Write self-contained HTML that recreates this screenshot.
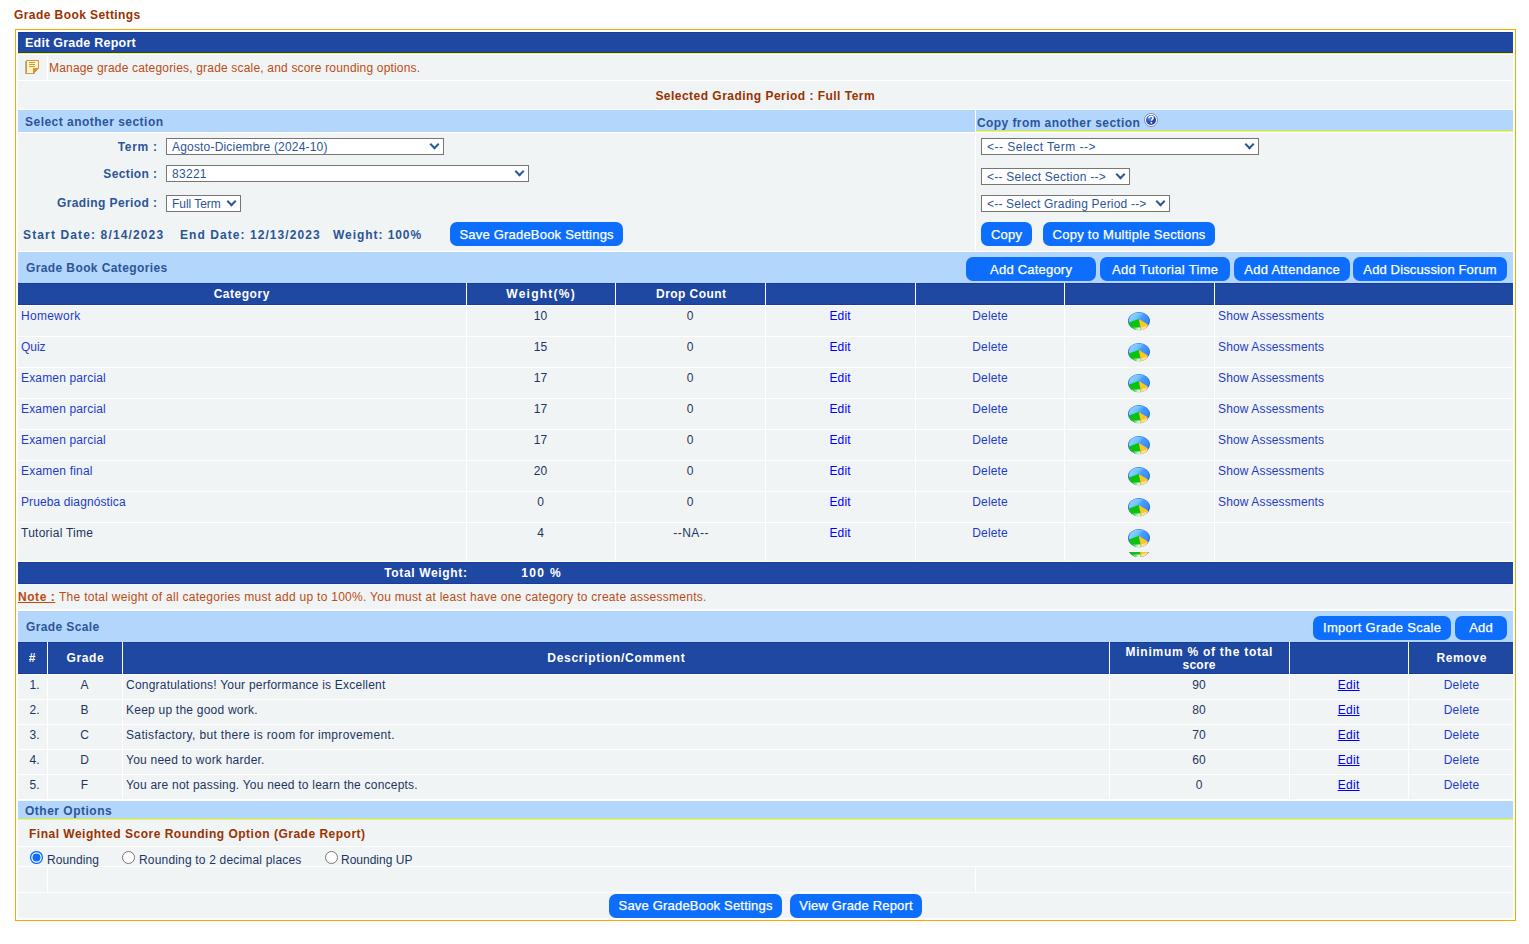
<!DOCTYPE html><html><head><meta charset="utf-8"><style>
*{margin:0;padding:0}
html,body{width:1529px;height:944px;overflow:hidden;background:#fff}
#root{position:relative;width:1529px;height:944px;overflow:hidden;font-family:"Liberation Sans",sans-serif}
#root>div{position:absolute}
.t{white-space:nowrap;height:0;line-height:0}
.t.c{width:800px;text-align:center}
.t.r{width:800px;text-align:right}
.sel{height:17px;box-sizing:border-box;border:1px solid #767676;background:#fff;font-size:12px;color:#2c5596;line-height:17px;padding-left:5px;white-space:nowrap;overflow:hidden}
.sel i{position:absolute;right:5px;top:2px;width:5px;height:5px;border-right:2px solid #2c56a2;border-bottom:2px solid #2c56a2;transform:rotate(45deg)}
.btn{background:#0d6efd;color:#fff;border-radius:7px;text-align:center;font-size:13px;white-space:nowrap;-webkit-text-stroke:0.25px #fff}
.pie{width:22px;height:19px}
.radio{width:13px;height:13px;box-sizing:border-box;border:1px solid #767676;border-radius:50%;background:#fff}
.radio.on{border:2px solid #0d6efd;background:#0d6efd;box-shadow:inset 0 0 0 2px #fff}
</style></head><body><div id="root">
<div class="t" style="left:14px;top:15px;font-size:12px;letter-spacing:0.422px;color:#993300;font-weight:bold;">Grade Book Settings</div>
<div style="left:15px;top:29px;width:1501px;height:892px;background:#fff;border:1px solid #ffa500;box-sizing:border-box;"></div>
<div style="left:18px;top:32px;width:1495px;height:21px;background:#1f48a2;border-top:1px solid #163ca0;border-bottom:1px solid #163ca0;box-sizing:border-box;"></div>
<div style="left:18px;top:53px;width:1495px;height:1px;background:#ffff00;"></div>
<div class="t" style="left:25px;top:43px;font-size:12.5px;letter-spacing:0.232px;color:#fff;font-weight:bold;">Edit Grade Report</div>
<div style="left:18px;top:55px;width:29px;height:25px;background:#f1f4f5;"></div>
<div style="left:48px;top:55px;width:1465px;height:25px;background:#f1f4f5;"></div>
<svg style="position:absolute;left:25px;top:59px" width="15" height="16" viewBox="0 0 15 16"><rect x="0" y="2" width="10" height="13" fill="#a9aeb8"/><path d="M1.5 1.5H13.5V9.5L8.5 14.5H1.5Z" fill="#fff6c8" stroke="#d6953d" stroke-width="1"/><path d="M4 3.5H10M4 5.5H10M4 7.5H10" stroke="#d6953d" stroke-width="1"/><path d="M8 9H14L8 15Z" fill="#d6953d"/></svg>
<div class="t" style="left:49px;top:68px;font-size:12px;letter-spacing:0.180px;color:#bc4c14;">Manage grade categories, grade scale, and score rounding options.</div>
<div style="left:18px;top:81px;width:1495px;height:28px;background:#f1f4f5;"></div>
<div class="t c" style="left:365.24px;top:96px;font-size:12px;letter-spacing:0.473px;color:#993300;font-weight:bold;">Selected Grading Period : Full Term</div>
<div style="left:18px;top:110px;width:957px;height:22px;background:#b3d6fd;"></div>
<div style="left:976px;top:110px;width:537px;height:21px;background:#b3d6fd;"></div>
<div style="left:976px;top:131px;width:537px;height:1px;background:#ffff00;"></div>
<div class="t" style="left:25px;top:122px;font-size:12px;letter-spacing:0.475px;color:#2c5596;font-weight:bold;">Select another section</div>
<div class="t" style="left:977px;top:123px;font-size:12px;letter-spacing:0.421px;color:#2c5596;font-weight:bold;">Copy from another section</div>
<div style="left:18px;top:133px;width:957px;height:118px;background:#f1f4f5;"></div>
<div style="left:976px;top:133px;width:537px;height:118px;background:#f1f4f5;"></div>
<div style="left:18px;top:252px;width:1495px;height:31px;background:#b3d6fd;"></div>
<div class="t" style="left:26px;top:268px;font-size:12px;letter-spacing:0.392px;color:#2c5596;font-weight:bold;">Grade Book Categories</div>
<div style="left:18px;top:283px;width:1495px;height:22px;background:#1f48a2;border-top:1px solid #163ca0;border-bottom:1px solid #163ca0;box-sizing:border-box;"></div>
<div style="left:466px;top:283px;width:1px;height:22px;background:#fff;"></div>
<div style="left:615px;top:283px;width:1px;height:22px;background:#fff;"></div>
<div style="left:765px;top:283px;width:1px;height:22px;background:#fff;"></div>
<div style="left:915px;top:283px;width:1px;height:22px;background:#fff;"></div>
<div style="left:1064px;top:283px;width:1px;height:22px;background:#fff;"></div>
<div style="left:1214px;top:283px;width:1px;height:22px;background:#fff;"></div>
<div class="t c" style="left:-158.24px;top:294px;font-size:12px;letter-spacing:0.523px;color:#fff;font-weight:bold;">Category</div>
<div class="t c" style="left:141.13px;top:294px;font-size:12px;letter-spacing:1.252px;color:#fff;font-weight:bold;">Weight(%)</div>
<div class="t c" style="left:291.22px;top:294px;font-size:12px;letter-spacing:0.432px;color:#fff;font-weight:bold;">Drop Count</div>
<div style="left:18px;top:306px;width:448px;height:30px;background:#f1f4f5;"></div>
<div style="left:467px;top:306px;width:148px;height:30px;background:#f1f4f5;"></div>
<div style="left:616px;top:306px;width:149px;height:30px;background:#f1f4f5;"></div>
<div style="left:766px;top:306px;width:149px;height:30px;background:#f1f4f5;"></div>
<div style="left:916px;top:306px;width:148px;height:30px;background:#f1f4f5;"></div>
<div style="left:1065px;top:306px;width:149px;height:30px;background:#f1f4f5;"></div>
<div style="left:1215px;top:306px;width:298px;height:30px;background:#f1f4f5;"></div>
<div class="t" style="left:21px;top:316px;font-size:12px;letter-spacing:0.269px;color:#1e3cc8;">Homework</div>
<div class="t c" style="left:140.64px;top:316px;font-size:12px;letter-spacing:0.290px;color:#1d3461;">10</div>
<div class="t c" style="left:290.14px;top:316px;font-size:12px;letter-spacing:0.290px;color:#1d3461;">0</div>
<div class="t c" style="left:440.09px;top:316px;font-size:12px;letter-spacing:0.181px;color:#0000ff;">Edit</div>
<div class="t c" style="left:590.07px;top:316px;font-size:12px;letter-spacing:0.135px;color:#1e3cc8;">Delete</div>
<div class="pie" style="left:1128px;top:312px"><svg width="22" height="19" viewBox="0 0 22 19"><defs><linearGradient id="pb" x1="0" y1="0" x2="1" y2="0.6"><stop offset="0" stop-color="#a9d6ff"/><stop offset="0.45" stop-color="#6cc4ff"/><stop offset="0.6" stop-color="#4a9cff"/><stop offset="1" stop-color="#2f8af5"/></linearGradient><linearGradient id="pg" x1="0" y1="0" x2="0" y2="1"><stop offset="0" stop-color="#00c800"/><stop offset="0.6" stop-color="#10c010"/><stop offset="1" stop-color="#50c850"/></linearGradient><linearGradient id="ps" x1="0" y1="0" x2="1" y2="0"><stop offset="0" stop-color="#30b830"/><stop offset="0.75" stop-color="#eafbea"/><stop offset="1" stop-color="#50c850"/></linearGradient><clipPath id="pc"><ellipse cx="11" cy="9.1" rx="10.6" ry="9.1"/></clipPath></defs><ellipse cx="11" cy="9.1" rx="11" ry="9" fill="#1e64e6"/><ellipse cx="11" cy="8.2" rx="10.2" ry="7.8" fill="url(#pb)"/><g clip-path="url(#pc)"><path d="M10.8 7 L1.5 10.2 L0 20 L13.6 20 Z" fill="url(#pg)"/><path d="M4 15.5 L5 19 L13.6 19 L13.4 15.2 C10 15.6 7 15.6 4 15.5Z" fill="url(#ps)"/><path d="M10.8 7 L19.6 12.3 L22 20 L13.6 20 Z" fill="#ffc61c"/><path d="M13.6 20 L13.4 15.2 C15 15 16.8 14.4 19 13.8 L19 20Z" fill="#ffdca0"/></g></svg></div>
<div class="t" style="left:1218px;top:316px;font-size:12px;letter-spacing:0.135px;color:#1e3cc8;">Show Assessments</div>
<div style="left:18px;top:337px;width:448px;height:30px;background:#f1f4f5;"></div>
<div style="left:467px;top:337px;width:148px;height:30px;background:#f1f4f5;"></div>
<div style="left:616px;top:337px;width:149px;height:30px;background:#f1f4f5;"></div>
<div style="left:766px;top:337px;width:149px;height:30px;background:#f1f4f5;"></div>
<div style="left:916px;top:337px;width:148px;height:30px;background:#f1f4f5;"></div>
<div style="left:1065px;top:337px;width:149px;height:30px;background:#f1f4f5;"></div>
<div style="left:1215px;top:337px;width:298px;height:30px;background:#f1f4f5;"></div>
<div class="t" style="left:21px;top:347px;font-size:12px;letter-spacing:-0.018px;color:#1e3cc8;">Quiz</div>
<div class="t c" style="left:140.64px;top:347px;font-size:12px;letter-spacing:0.290px;color:#1d3461;">15</div>
<div class="t c" style="left:290.14px;top:347px;font-size:12px;letter-spacing:0.290px;color:#1d3461;">0</div>
<div class="t c" style="left:440.09px;top:347px;font-size:12px;letter-spacing:0.181px;color:#0000ff;">Edit</div>
<div class="t c" style="left:590.07px;top:347px;font-size:12px;letter-spacing:0.135px;color:#1e3cc8;">Delete</div>
<div class="pie" style="left:1128px;top:343px"><svg width="22" height="19" viewBox="0 0 22 19"><defs><linearGradient id="pb" x1="0" y1="0" x2="1" y2="0.6"><stop offset="0" stop-color="#a9d6ff"/><stop offset="0.45" stop-color="#6cc4ff"/><stop offset="0.6" stop-color="#4a9cff"/><stop offset="1" stop-color="#2f8af5"/></linearGradient><linearGradient id="pg" x1="0" y1="0" x2="0" y2="1"><stop offset="0" stop-color="#00c800"/><stop offset="0.6" stop-color="#10c010"/><stop offset="1" stop-color="#50c850"/></linearGradient><linearGradient id="ps" x1="0" y1="0" x2="1" y2="0"><stop offset="0" stop-color="#30b830"/><stop offset="0.75" stop-color="#eafbea"/><stop offset="1" stop-color="#50c850"/></linearGradient><clipPath id="pc"><ellipse cx="11" cy="9.1" rx="10.6" ry="9.1"/></clipPath></defs><ellipse cx="11" cy="9.1" rx="11" ry="9" fill="#1e64e6"/><ellipse cx="11" cy="8.2" rx="10.2" ry="7.8" fill="url(#pb)"/><g clip-path="url(#pc)"><path d="M10.8 7 L1.5 10.2 L0 20 L13.6 20 Z" fill="url(#pg)"/><path d="M4 15.5 L5 19 L13.6 19 L13.4 15.2 C10 15.6 7 15.6 4 15.5Z" fill="url(#ps)"/><path d="M10.8 7 L19.6 12.3 L22 20 L13.6 20 Z" fill="#ffc61c"/><path d="M13.6 20 L13.4 15.2 C15 15 16.8 14.4 19 13.8 L19 20Z" fill="#ffdca0"/></g></svg></div>
<div class="t" style="left:1218px;top:347px;font-size:12px;letter-spacing:0.135px;color:#1e3cc8;">Show Assessments</div>
<div style="left:18px;top:368px;width:448px;height:30px;background:#f1f4f5;"></div>
<div style="left:467px;top:368px;width:148px;height:30px;background:#f1f4f5;"></div>
<div style="left:616px;top:368px;width:149px;height:30px;background:#f1f4f5;"></div>
<div style="left:766px;top:368px;width:149px;height:30px;background:#f1f4f5;"></div>
<div style="left:916px;top:368px;width:148px;height:30px;background:#f1f4f5;"></div>
<div style="left:1065px;top:368px;width:149px;height:30px;background:#f1f4f5;"></div>
<div style="left:1215px;top:368px;width:298px;height:30px;background:#f1f4f5;"></div>
<div class="t" style="left:21px;top:378px;font-size:12px;letter-spacing:0.157px;color:#1e3cc8;">Examen parcial</div>
<div class="t c" style="left:140.64px;top:378px;font-size:12px;letter-spacing:0.290px;color:#1d3461;">17</div>
<div class="t c" style="left:290.14px;top:378px;font-size:12px;letter-spacing:0.290px;color:#1d3461;">0</div>
<div class="t c" style="left:440.09px;top:378px;font-size:12px;letter-spacing:0.181px;color:#0000ff;">Edit</div>
<div class="t c" style="left:590.07px;top:378px;font-size:12px;letter-spacing:0.135px;color:#1e3cc8;">Delete</div>
<div class="pie" style="left:1128px;top:374px"><svg width="22" height="19" viewBox="0 0 22 19"><defs><linearGradient id="pb" x1="0" y1="0" x2="1" y2="0.6"><stop offset="0" stop-color="#a9d6ff"/><stop offset="0.45" stop-color="#6cc4ff"/><stop offset="0.6" stop-color="#4a9cff"/><stop offset="1" stop-color="#2f8af5"/></linearGradient><linearGradient id="pg" x1="0" y1="0" x2="0" y2="1"><stop offset="0" stop-color="#00c800"/><stop offset="0.6" stop-color="#10c010"/><stop offset="1" stop-color="#50c850"/></linearGradient><linearGradient id="ps" x1="0" y1="0" x2="1" y2="0"><stop offset="0" stop-color="#30b830"/><stop offset="0.75" stop-color="#eafbea"/><stop offset="1" stop-color="#50c850"/></linearGradient><clipPath id="pc"><ellipse cx="11" cy="9.1" rx="10.6" ry="9.1"/></clipPath></defs><ellipse cx="11" cy="9.1" rx="11" ry="9" fill="#1e64e6"/><ellipse cx="11" cy="8.2" rx="10.2" ry="7.8" fill="url(#pb)"/><g clip-path="url(#pc)"><path d="M10.8 7 L1.5 10.2 L0 20 L13.6 20 Z" fill="url(#pg)"/><path d="M4 15.5 L5 19 L13.6 19 L13.4 15.2 C10 15.6 7 15.6 4 15.5Z" fill="url(#ps)"/><path d="M10.8 7 L19.6 12.3 L22 20 L13.6 20 Z" fill="#ffc61c"/><path d="M13.6 20 L13.4 15.2 C15 15 16.8 14.4 19 13.8 L19 20Z" fill="#ffdca0"/></g></svg></div>
<div class="t" style="left:1218px;top:378px;font-size:12px;letter-spacing:0.135px;color:#1e3cc8;">Show Assessments</div>
<div style="left:18px;top:399px;width:448px;height:30px;background:#f1f4f5;"></div>
<div style="left:467px;top:399px;width:148px;height:30px;background:#f1f4f5;"></div>
<div style="left:616px;top:399px;width:149px;height:30px;background:#f1f4f5;"></div>
<div style="left:766px;top:399px;width:149px;height:30px;background:#f1f4f5;"></div>
<div style="left:916px;top:399px;width:148px;height:30px;background:#f1f4f5;"></div>
<div style="left:1065px;top:399px;width:149px;height:30px;background:#f1f4f5;"></div>
<div style="left:1215px;top:399px;width:298px;height:30px;background:#f1f4f5;"></div>
<div class="t" style="left:21px;top:409px;font-size:12px;letter-spacing:0.157px;color:#1e3cc8;">Examen parcial</div>
<div class="t c" style="left:140.64px;top:409px;font-size:12px;letter-spacing:0.290px;color:#1d3461;">17</div>
<div class="t c" style="left:290.14px;top:409px;font-size:12px;letter-spacing:0.290px;color:#1d3461;">0</div>
<div class="t c" style="left:440.09px;top:409px;font-size:12px;letter-spacing:0.181px;color:#0000ff;">Edit</div>
<div class="t c" style="left:590.07px;top:409px;font-size:12px;letter-spacing:0.135px;color:#1e3cc8;">Delete</div>
<div class="pie" style="left:1128px;top:405px"><svg width="22" height="19" viewBox="0 0 22 19"><defs><linearGradient id="pb" x1="0" y1="0" x2="1" y2="0.6"><stop offset="0" stop-color="#a9d6ff"/><stop offset="0.45" stop-color="#6cc4ff"/><stop offset="0.6" stop-color="#4a9cff"/><stop offset="1" stop-color="#2f8af5"/></linearGradient><linearGradient id="pg" x1="0" y1="0" x2="0" y2="1"><stop offset="0" stop-color="#00c800"/><stop offset="0.6" stop-color="#10c010"/><stop offset="1" stop-color="#50c850"/></linearGradient><linearGradient id="ps" x1="0" y1="0" x2="1" y2="0"><stop offset="0" stop-color="#30b830"/><stop offset="0.75" stop-color="#eafbea"/><stop offset="1" stop-color="#50c850"/></linearGradient><clipPath id="pc"><ellipse cx="11" cy="9.1" rx="10.6" ry="9.1"/></clipPath></defs><ellipse cx="11" cy="9.1" rx="11" ry="9" fill="#1e64e6"/><ellipse cx="11" cy="8.2" rx="10.2" ry="7.8" fill="url(#pb)"/><g clip-path="url(#pc)"><path d="M10.8 7 L1.5 10.2 L0 20 L13.6 20 Z" fill="url(#pg)"/><path d="M4 15.5 L5 19 L13.6 19 L13.4 15.2 C10 15.6 7 15.6 4 15.5Z" fill="url(#ps)"/><path d="M10.8 7 L19.6 12.3 L22 20 L13.6 20 Z" fill="#ffc61c"/><path d="M13.6 20 L13.4 15.2 C15 15 16.8 14.4 19 13.8 L19 20Z" fill="#ffdca0"/></g></svg></div>
<div class="t" style="left:1218px;top:409px;font-size:12px;letter-spacing:0.135px;color:#1e3cc8;">Show Assessments</div>
<div style="left:18px;top:430px;width:448px;height:30px;background:#f1f4f5;"></div>
<div style="left:467px;top:430px;width:148px;height:30px;background:#f1f4f5;"></div>
<div style="left:616px;top:430px;width:149px;height:30px;background:#f1f4f5;"></div>
<div style="left:766px;top:430px;width:149px;height:30px;background:#f1f4f5;"></div>
<div style="left:916px;top:430px;width:148px;height:30px;background:#f1f4f5;"></div>
<div style="left:1065px;top:430px;width:149px;height:30px;background:#f1f4f5;"></div>
<div style="left:1215px;top:430px;width:298px;height:30px;background:#f1f4f5;"></div>
<div class="t" style="left:21px;top:440px;font-size:12px;letter-spacing:0.157px;color:#1e3cc8;">Examen parcial</div>
<div class="t c" style="left:140.64px;top:440px;font-size:12px;letter-spacing:0.290px;color:#1d3461;">17</div>
<div class="t c" style="left:290.14px;top:440px;font-size:12px;letter-spacing:0.290px;color:#1d3461;">0</div>
<div class="t c" style="left:440.09px;top:440px;font-size:12px;letter-spacing:0.181px;color:#0000ff;">Edit</div>
<div class="t c" style="left:590.07px;top:440px;font-size:12px;letter-spacing:0.135px;color:#1e3cc8;">Delete</div>
<div class="pie" style="left:1128px;top:436px"><svg width="22" height="19" viewBox="0 0 22 19"><defs><linearGradient id="pb" x1="0" y1="0" x2="1" y2="0.6"><stop offset="0" stop-color="#a9d6ff"/><stop offset="0.45" stop-color="#6cc4ff"/><stop offset="0.6" stop-color="#4a9cff"/><stop offset="1" stop-color="#2f8af5"/></linearGradient><linearGradient id="pg" x1="0" y1="0" x2="0" y2="1"><stop offset="0" stop-color="#00c800"/><stop offset="0.6" stop-color="#10c010"/><stop offset="1" stop-color="#50c850"/></linearGradient><linearGradient id="ps" x1="0" y1="0" x2="1" y2="0"><stop offset="0" stop-color="#30b830"/><stop offset="0.75" stop-color="#eafbea"/><stop offset="1" stop-color="#50c850"/></linearGradient><clipPath id="pc"><ellipse cx="11" cy="9.1" rx="10.6" ry="9.1"/></clipPath></defs><ellipse cx="11" cy="9.1" rx="11" ry="9" fill="#1e64e6"/><ellipse cx="11" cy="8.2" rx="10.2" ry="7.8" fill="url(#pb)"/><g clip-path="url(#pc)"><path d="M10.8 7 L1.5 10.2 L0 20 L13.6 20 Z" fill="url(#pg)"/><path d="M4 15.5 L5 19 L13.6 19 L13.4 15.2 C10 15.6 7 15.6 4 15.5Z" fill="url(#ps)"/><path d="M10.8 7 L19.6 12.3 L22 20 L13.6 20 Z" fill="#ffc61c"/><path d="M13.6 20 L13.4 15.2 C15 15 16.8 14.4 19 13.8 L19 20Z" fill="#ffdca0"/></g></svg></div>
<div class="t" style="left:1218px;top:440px;font-size:12px;letter-spacing:0.135px;color:#1e3cc8;">Show Assessments</div>
<div style="left:18px;top:461px;width:448px;height:30px;background:#f1f4f5;"></div>
<div style="left:467px;top:461px;width:148px;height:30px;background:#f1f4f5;"></div>
<div style="left:616px;top:461px;width:149px;height:30px;background:#f1f4f5;"></div>
<div style="left:766px;top:461px;width:149px;height:30px;background:#f1f4f5;"></div>
<div style="left:916px;top:461px;width:148px;height:30px;background:#f1f4f5;"></div>
<div style="left:1065px;top:461px;width:149px;height:30px;background:#f1f4f5;"></div>
<div style="left:1215px;top:461px;width:298px;height:30px;background:#f1f4f5;"></div>
<div class="t" style="left:21px;top:471px;font-size:12px;letter-spacing:0.194px;color:#1e3cc8;">Examen final</div>
<div class="t c" style="left:140.64px;top:471px;font-size:12px;letter-spacing:0.290px;color:#1d3461;">20</div>
<div class="t c" style="left:290.14px;top:471px;font-size:12px;letter-spacing:0.290px;color:#1d3461;">0</div>
<div class="t c" style="left:440.09px;top:471px;font-size:12px;letter-spacing:0.181px;color:#0000ff;">Edit</div>
<div class="t c" style="left:590.07px;top:471px;font-size:12px;letter-spacing:0.135px;color:#1e3cc8;">Delete</div>
<div class="pie" style="left:1128px;top:467px"><svg width="22" height="19" viewBox="0 0 22 19"><defs><linearGradient id="pb" x1="0" y1="0" x2="1" y2="0.6"><stop offset="0" stop-color="#a9d6ff"/><stop offset="0.45" stop-color="#6cc4ff"/><stop offset="0.6" stop-color="#4a9cff"/><stop offset="1" stop-color="#2f8af5"/></linearGradient><linearGradient id="pg" x1="0" y1="0" x2="0" y2="1"><stop offset="0" stop-color="#00c800"/><stop offset="0.6" stop-color="#10c010"/><stop offset="1" stop-color="#50c850"/></linearGradient><linearGradient id="ps" x1="0" y1="0" x2="1" y2="0"><stop offset="0" stop-color="#30b830"/><stop offset="0.75" stop-color="#eafbea"/><stop offset="1" stop-color="#50c850"/></linearGradient><clipPath id="pc"><ellipse cx="11" cy="9.1" rx="10.6" ry="9.1"/></clipPath></defs><ellipse cx="11" cy="9.1" rx="11" ry="9" fill="#1e64e6"/><ellipse cx="11" cy="8.2" rx="10.2" ry="7.8" fill="url(#pb)"/><g clip-path="url(#pc)"><path d="M10.8 7 L1.5 10.2 L0 20 L13.6 20 Z" fill="url(#pg)"/><path d="M4 15.5 L5 19 L13.6 19 L13.4 15.2 C10 15.6 7 15.6 4 15.5Z" fill="url(#ps)"/><path d="M10.8 7 L19.6 12.3 L22 20 L13.6 20 Z" fill="#ffc61c"/><path d="M13.6 20 L13.4 15.2 C15 15 16.8 14.4 19 13.8 L19 20Z" fill="#ffdca0"/></g></svg></div>
<div class="t" style="left:1218px;top:471px;font-size:12px;letter-spacing:0.135px;color:#1e3cc8;">Show Assessments</div>
<div style="left:18px;top:492px;width:448px;height:30px;background:#f1f4f5;"></div>
<div style="left:467px;top:492px;width:148px;height:30px;background:#f1f4f5;"></div>
<div style="left:616px;top:492px;width:149px;height:30px;background:#f1f4f5;"></div>
<div style="left:766px;top:492px;width:149px;height:30px;background:#f1f4f5;"></div>
<div style="left:916px;top:492px;width:148px;height:30px;background:#f1f4f5;"></div>
<div style="left:1065px;top:492px;width:149px;height:30px;background:#f1f4f5;"></div>
<div style="left:1215px;top:492px;width:298px;height:30px;background:#f1f4f5;"></div>
<div class="t" style="left:21px;top:502px;font-size:12px;letter-spacing:0.109px;color:#1e3cc8;">Prueba diagnóstica</div>
<div class="t c" style="left:140.64px;top:502px;font-size:12px;letter-spacing:0.290px;color:#1d3461;">0</div>
<div class="t c" style="left:290.14px;top:502px;font-size:12px;letter-spacing:0.290px;color:#1d3461;">0</div>
<div class="t c" style="left:440.09px;top:502px;font-size:12px;letter-spacing:0.181px;color:#0000ff;">Edit</div>
<div class="t c" style="left:590.07px;top:502px;font-size:12px;letter-spacing:0.135px;color:#1e3cc8;">Delete</div>
<div class="pie" style="left:1128px;top:498px"><svg width="22" height="19" viewBox="0 0 22 19"><defs><linearGradient id="pb" x1="0" y1="0" x2="1" y2="0.6"><stop offset="0" stop-color="#a9d6ff"/><stop offset="0.45" stop-color="#6cc4ff"/><stop offset="0.6" stop-color="#4a9cff"/><stop offset="1" stop-color="#2f8af5"/></linearGradient><linearGradient id="pg" x1="0" y1="0" x2="0" y2="1"><stop offset="0" stop-color="#00c800"/><stop offset="0.6" stop-color="#10c010"/><stop offset="1" stop-color="#50c850"/></linearGradient><linearGradient id="ps" x1="0" y1="0" x2="1" y2="0"><stop offset="0" stop-color="#30b830"/><stop offset="0.75" stop-color="#eafbea"/><stop offset="1" stop-color="#50c850"/></linearGradient><clipPath id="pc"><ellipse cx="11" cy="9.1" rx="10.6" ry="9.1"/></clipPath></defs><ellipse cx="11" cy="9.1" rx="11" ry="9" fill="#1e64e6"/><ellipse cx="11" cy="8.2" rx="10.2" ry="7.8" fill="url(#pb)"/><g clip-path="url(#pc)"><path d="M10.8 7 L1.5 10.2 L0 20 L13.6 20 Z" fill="url(#pg)"/><path d="M4 15.5 L5 19 L13.6 19 L13.4 15.2 C10 15.6 7 15.6 4 15.5Z" fill="url(#ps)"/><path d="M10.8 7 L19.6 12.3 L22 20 L13.6 20 Z" fill="#ffc61c"/><path d="M13.6 20 L13.4 15.2 C15 15 16.8 14.4 19 13.8 L19 20Z" fill="#ffdca0"/></g></svg></div>
<div class="t" style="left:1218px;top:502px;font-size:12px;letter-spacing:0.135px;color:#1e3cc8;">Show Assessments</div>
<div style="left:18px;top:523px;width:448px;height:38px;background:#f1f4f5;"></div>
<div style="left:467px;top:523px;width:148px;height:38px;background:#f1f4f5;"></div>
<div style="left:616px;top:523px;width:149px;height:38px;background:#f1f4f5;"></div>
<div style="left:766px;top:523px;width:149px;height:38px;background:#f1f4f5;"></div>
<div style="left:916px;top:523px;width:148px;height:38px;background:#f1f4f5;"></div>
<div style="left:1065px;top:523px;width:149px;height:38px;background:#f1f4f5;"></div>
<div style="left:1215px;top:523px;width:298px;height:38px;background:#f1f4f5;"></div>
<div class="t" style="left:21px;top:533px;font-size:12px;letter-spacing:0.253px;color:#1d3461;">Tutorial Time</div>
<div class="t c" style="left:140.64px;top:533px;font-size:12px;letter-spacing:0.290px;color:#1d3461;">4</div>
<div class="t c" style="left:291.05px;top:533px;font-size:12px;letter-spacing:0.508px;color:#1d3461;">--NA--</div>
<div class="t c" style="left:440.09px;top:533px;font-size:12px;letter-spacing:0.181px;color:#0000ff;">Edit</div>
<div class="t c" style="left:590.07px;top:533px;font-size:12px;letter-spacing:0.135px;color:#1e3cc8;">Delete</div>
<div class="pie" style="left:1128px;top:529px"><svg width="22" height="19" viewBox="0 0 22 19"><defs><linearGradient id="pb" x1="0" y1="0" x2="1" y2="0.6"><stop offset="0" stop-color="#a9d6ff"/><stop offset="0.45" stop-color="#6cc4ff"/><stop offset="0.6" stop-color="#4a9cff"/><stop offset="1" stop-color="#2f8af5"/></linearGradient><linearGradient id="pg" x1="0" y1="0" x2="0" y2="1"><stop offset="0" stop-color="#00c800"/><stop offset="0.6" stop-color="#10c010"/><stop offset="1" stop-color="#50c850"/></linearGradient><linearGradient id="ps" x1="0" y1="0" x2="1" y2="0"><stop offset="0" stop-color="#30b830"/><stop offset="0.75" stop-color="#eafbea"/><stop offset="1" stop-color="#50c850"/></linearGradient><clipPath id="pc"><ellipse cx="11" cy="9.1" rx="10.6" ry="9.1"/></clipPath></defs><ellipse cx="11" cy="9.1" rx="11" ry="9" fill="#1e64e6"/><ellipse cx="11" cy="8.2" rx="10.2" ry="7.8" fill="url(#pb)"/><g clip-path="url(#pc)"><path d="M10.8 7 L1.5 10.2 L0 20 L13.6 20 Z" fill="url(#pg)"/><path d="M4 15.5 L5 19 L13.6 19 L13.4 15.2 C10 15.6 7 15.6 4 15.5Z" fill="url(#ps)"/><path d="M10.8 7 L19.6 12.3 L22 20 L13.6 20 Z" fill="#ffc61c"/><path d="M13.6 20 L13.4 15.2 C15 15 16.8 14.4 19 13.8 L19 20Z" fill="#ffdca0"/></g></svg></div>
<div style="left:18px;top:562px;width:1495px;height:22px;background:#1f48a2;border-top:1px solid #163ca0;border-bottom:1px solid #163ca0;box-sizing:border-box;"></div>
<div class="t r" style="left:-332.34px;top:573px;font-size:12px;letter-spacing:0.663px;color:#fff;font-weight:bold;">Total Weight:</div>
<div class="t c" style="left:141.68px;top:573px;font-size:12px;letter-spacing:1.355px;color:#fff;font-weight:bold;">100 %</div>
<div style="left:18px;top:584px;width:1495px;height:25px;background:#f1f4f5;"></div>
<div class="t" style="left:18px;top:597px;font-size:12px;letter-spacing:0.556px;color:#bc4c14;font-weight:bold;"><u>Note :</u></div>
<div class="t" style="left:59px;top:597px;font-size:12px;letter-spacing:0.281px;color:#bc4c14;">The total weight of all categories must add up to 100%. You must at least have one category to create assessments.</div>
<div style="left:18px;top:611px;width:1495px;height:31px;background:#b3d6fd;"></div>
<div class="t" style="left:26px;top:627px;font-size:12px;letter-spacing:0.384px;color:#2c5596;font-weight:bold;">Grade Scale</div>
<div style="left:18px;top:642px;width:1495px;height:32px;background:#1f48a2;border-top:1px solid #163ca0;border-bottom:1px solid #163ca0;box-sizing:border-box;"></div>
<div style="left:47px;top:642px;width:1px;height:32px;background:#fff;"></div>
<div style="left:122px;top:642px;width:1px;height:32px;background:#fff;"></div>
<div style="left:1109px;top:642px;width:1px;height:32px;background:#fff;"></div>
<div style="left:1289px;top:642px;width:1px;height:32px;background:#fff;"></div>
<div style="left:1408px;top:642px;width:1px;height:32px;background:#fff;"></div>
<div class="t c" style="left:-366.77px;top:658px;font-size:12px;letter-spacing:2.451px;color:#fff;font-weight:bold;">#</div>
<div class="t c" style="left:-314.70px;top:658px;font-size:12px;letter-spacing:0.604px;color:#fff;font-weight:bold;">Grade</div>
<div class="t c" style="left:216.35px;top:658px;font-size:12px;letter-spacing:0.701px;color:#fff;font-weight:bold;">Description/Comment</div>
<div class="t c" style="left:799.37px;top:652px;font-size:12px;letter-spacing:0.744px;color:#fff;font-weight:bold;">Minimum % of the total</div>
<div class="t c" style="left:799.12px;top:665px;font-size:12px;letter-spacing:0.231px;color:#fff;font-weight:bold;">score</div>
<div class="t c" style="left:1061.73px;top:658px;font-size:12px;letter-spacing:0.652px;color:#fff;font-weight:bold;">Remove</div>
<div style="left:18px;top:675px;width:29px;height:24px;background:#f1f4f5;"></div>
<div style="left:48px;top:675px;width:74px;height:24px;background:#f1f4f5;"></div>
<div style="left:123px;top:675px;width:986px;height:24px;background:#f1f4f5;"></div>
<div style="left:1110px;top:675px;width:179px;height:24px;background:#f1f4f5;"></div>
<div style="left:1290px;top:675px;width:118px;height:24px;background:#f1f4f5;"></div>
<div style="left:1409px;top:675px;width:104px;height:24px;background:#f1f4f5;"></div>
<div class="t c" style="left:-365.39px;top:685px;font-size:12px;letter-spacing:0.217px;color:#1d3461;">1.</div>
<div class="t c" style="left:-315.76px;top:685px;font-size:12px;letter-spacing:-0.517px;color:#1d3461;">A</div>
<div class="t" style="left:126px;top:685px;font-size:12px;letter-spacing:0.218px;color:#1d3461;">Congratulations! Your performance is Excellent</div>
<div class="t c" style="left:799.14px;top:685px;font-size:12px;letter-spacing:0.290px;color:#1d3461;">90</div>
<div class="t c" style="left:948.67px;top:685px;font-size:12px;letter-spacing:0.331px;color:#0000f0;"><u>Edit</u></div>
<div class="t c" style="left:1061.57px;top:685px;font-size:12px;letter-spacing:0.135px;color:#1e3cc8;">Delete</div>
<div style="left:18px;top:700px;width:29px;height:24px;background:#f1f4f5;"></div>
<div style="left:48px;top:700px;width:74px;height:24px;background:#f1f4f5;"></div>
<div style="left:123px;top:700px;width:986px;height:24px;background:#f1f4f5;"></div>
<div style="left:1110px;top:700px;width:179px;height:24px;background:#f1f4f5;"></div>
<div style="left:1290px;top:700px;width:118px;height:24px;background:#f1f4f5;"></div>
<div style="left:1409px;top:700px;width:104px;height:24px;background:#f1f4f5;"></div>
<div class="t c" style="left:-365.39px;top:710px;font-size:12px;letter-spacing:0.217px;color:#1d3461;">2.</div>
<div class="t c" style="left:-315.75px;top:710px;font-size:12px;letter-spacing:-0.495px;color:#1d3461;">B</div>
<div class="t" style="left:126px;top:710px;font-size:12px;letter-spacing:0.229px;color:#1d3461;">Keep up the good work.</div>
<div class="t c" style="left:799.14px;top:710px;font-size:12px;letter-spacing:0.290px;color:#1d3461;">80</div>
<div class="t c" style="left:948.67px;top:710px;font-size:12px;letter-spacing:0.331px;color:#0000f0;"><u>Edit</u></div>
<div class="t c" style="left:1061.57px;top:710px;font-size:12px;letter-spacing:0.135px;color:#1e3cc8;">Delete</div>
<div style="left:18px;top:725px;width:29px;height:24px;background:#f1f4f5;"></div>
<div style="left:48px;top:725px;width:74px;height:24px;background:#f1f4f5;"></div>
<div style="left:123px;top:725px;width:986px;height:24px;background:#f1f4f5;"></div>
<div style="left:1110px;top:725px;width:179px;height:24px;background:#f1f4f5;"></div>
<div style="left:1290px;top:725px;width:118px;height:24px;background:#f1f4f5;"></div>
<div style="left:1409px;top:725px;width:104px;height:24px;background:#f1f4f5;"></div>
<div class="t c" style="left:-365.39px;top:735px;font-size:12px;letter-spacing:0.217px;color:#1d3461;">3.</div>
<div class="t c" style="left:-316.01px;top:735px;font-size:12px;letter-spacing:-1.024px;color:#1d3461;">C</div>
<div class="t" style="left:126px;top:735px;font-size:12px;letter-spacing:0.355px;color:#1d3461;">Satisfactory, but there is room for improvement.</div>
<div class="t c" style="left:799.14px;top:735px;font-size:12px;letter-spacing:0.290px;color:#1d3461;">70</div>
<div class="t c" style="left:948.67px;top:735px;font-size:12px;letter-spacing:0.331px;color:#0000f0;"><u>Edit</u></div>
<div class="t c" style="left:1061.57px;top:735px;font-size:12px;letter-spacing:0.135px;color:#1e3cc8;">Delete</div>
<div style="left:18px;top:750px;width:29px;height:24px;background:#f1f4f5;"></div>
<div style="left:48px;top:750px;width:74px;height:24px;background:#f1f4f5;"></div>
<div style="left:123px;top:750px;width:986px;height:24px;background:#f1f4f5;"></div>
<div style="left:1110px;top:750px;width:179px;height:24px;background:#f1f4f5;"></div>
<div style="left:1290px;top:750px;width:118px;height:24px;background:#f1f4f5;"></div>
<div style="left:1409px;top:750px;width:104px;height:24px;background:#f1f4f5;"></div>
<div class="t c" style="left:-365.39px;top:760px;font-size:12px;letter-spacing:0.217px;color:#1d3461;">4.</div>
<div class="t c" style="left:-315.62px;top:760px;font-size:12px;letter-spacing:-0.238px;color:#1d3461;">D</div>
<div class="t" style="left:126px;top:760px;font-size:12px;letter-spacing:0.238px;color:#1d3461;">You need to work harder.</div>
<div class="t c" style="left:799.14px;top:760px;font-size:12px;letter-spacing:0.290px;color:#1d3461;">60</div>
<div class="t c" style="left:948.67px;top:760px;font-size:12px;letter-spacing:0.331px;color:#0000f0;"><u>Edit</u></div>
<div class="t c" style="left:1061.57px;top:760px;font-size:12px;letter-spacing:0.135px;color:#1e3cc8;">Delete</div>
<div style="left:18px;top:775px;width:29px;height:24px;background:#f1f4f5;"></div>
<div style="left:48px;top:775px;width:74px;height:24px;background:#f1f4f5;"></div>
<div style="left:123px;top:775px;width:986px;height:24px;background:#f1f4f5;"></div>
<div style="left:1110px;top:775px;width:179px;height:24px;background:#f1f4f5;"></div>
<div style="left:1290px;top:775px;width:118px;height:24px;background:#f1f4f5;"></div>
<div style="left:1409px;top:775px;width:104px;height:24px;background:#f1f4f5;"></div>
<div class="t c" style="left:-365.39px;top:785px;font-size:12px;letter-spacing:0.217px;color:#1d3461;">5.</div>
<div class="t c" style="left:-316.02px;top:785px;font-size:12px;letter-spacing:-1.035px;color:#1d3461;">F</div>
<div class="t" style="left:126px;top:785px;font-size:12px;letter-spacing:0.220px;color:#1d3461;">You are not passing. You need to learn the concepts.</div>
<div class="t c" style="left:799.14px;top:785px;font-size:12px;letter-spacing:0.290px;color:#1d3461;">0</div>
<div class="t c" style="left:948.67px;top:785px;font-size:12px;letter-spacing:0.331px;color:#0000f0;"><u>Edit</u></div>
<div class="t c" style="left:1061.57px;top:785px;font-size:12px;letter-spacing:0.135px;color:#1e3cc8;">Delete</div>
<div style="left:18px;top:801px;width:1495px;height:18px;background:#b3d6fd;"></div>
<div style="left:18px;top:819px;width:1495px;height:1px;background:#ffff00;"></div>
<div class="t" style="left:25px;top:811px;font-size:12px;letter-spacing:0.503px;color:#2c5596;font-weight:bold;">Other Options</div>
<div style="left:18px;top:820px;width:1495px;height:26px;background:#f1f4f5;"></div>
<div class="t" style="left:29px;top:834px;font-size:12px;letter-spacing:0.500px;color:#993300;font-weight:bold;">Final Weighted Score Rounding Option (Grade Report)</div>
<div style="left:18px;top:847px;width:1495px;height:19px;background:#f1f4f5;"></div>
<svg style="position:absolute;left:30px;top:851px" width="13" height="13" viewBox="0 0 13 13"><circle cx="6.5" cy="6.5" r="5.9" fill="#fff" stroke="#0d6efd" stroke-width="1.3"/><circle cx="6.5" cy="6.5" r="4" fill="#0d6efd"/></svg>
<div class="t" style="left:47px;top:860px;font-size:12px;letter-spacing:0.078px;color:#1d3461;">Rounding</div>
<svg style="position:absolute;left:122px;top:851px" width="13" height="13" viewBox="0 0 13 13"><circle cx="6.5" cy="6.5" r="6" fill="#fff" stroke="#767676" stroke-width="1"/></svg>
<div class="t" style="left:139px;top:860px;font-size:12px;letter-spacing:0.181px;color:#1d3461;">Rounding to 2 decimal places</div>
<svg style="position:absolute;left:325px;top:851px" width="13" height="13" viewBox="0 0 13 13"><circle cx="6.5" cy="6.5" r="6" fill="#fff" stroke="#767676" stroke-width="1"/></svg>
<div class="t" style="left:341px;top:860px;font-size:12px;letter-spacing:0.002px;color:#1d3461;">Rounding UP</div>
<div style="left:18px;top:867px;width:29px;height:25px;background:#f1f4f5;"></div>
<div style="left:48px;top:867px;width:927px;height:25px;background:#f1f4f5;"></div>
<div style="left:976px;top:867px;width:537px;height:25px;background:#f1f4f5;"></div>
<div style="left:18px;top:893px;width:1495px;height:25px;background:#f1f4f5;"></div>
<div class="t r" style="left:-642.30px;top:147px;font-size:12px;letter-spacing:0.703px;color:#2c5596;font-weight:bold;">Term :</div>
<div class="t r" style="left:-642.62px;top:174px;font-size:12px;letter-spacing:0.381px;color:#2c5596;font-weight:bold;">Section :</div>
<div class="t r" style="left:-642.60px;top:203px;font-size:12px;letter-spacing:0.400px;color:#2c5596;font-weight:bold;">Grading Period :</div>
<div class="sel" style="left:166px;top:138px;width:278px"><span style="letter-spacing:0.187px">Agosto-Diciembre (2024-10)</span><i></i></div>
<div class="sel" style="left:166px;top:165px;width:363px"><span style="letter-spacing:0.290px">83221</span><i></i></div>
<div class="sel" style="left:166px;top:195px;width:75px"><span style="letter-spacing:-0.044px">Full Term</span><i></i></div>
<div class="sel" style="left:981px;top:138px;width:278px"><span style="letter-spacing:0.479px">&lt;-- Select Term --&gt;</span><i></i></div>
<div class="sel" style="left:981px;top:168px;width:149px"><span style="letter-spacing:0.256px">&lt;-- Select Section --&gt;</span><i></i></div>
<div class="sel" style="left:981px;top:195px;width:189px"><span style="letter-spacing:0.188px">&lt;-- Select Grading Period --&gt;</span><i></i></div>
<div class="t" style="left:23px;top:235px;font-size:12px;letter-spacing:1.133px;color:#2c5596;font-weight:bold;">Start Date: 8/14/2023</div>
<div class="t" style="left:180px;top:235px;font-size:12px;letter-spacing:1.065px;color:#2c5596;font-weight:bold;">End Date: 12/13/2023</div>
<div class="t" style="left:333px;top:235px;font-size:12px;letter-spacing:0.942px;color:#2c5596;font-weight:bold;">Weight: 100%</div>
<svg style="position:absolute;left:1144px;top:113px" width="14" height="14" viewBox="0 0 14 14"><circle cx="7" cy="7" r="6.5" fill="#fff" stroke="#7b8aa8" stroke-width="1"/><defs><radialGradient id="hg" cx="0.35" cy="0.3" r="0.8"><stop offset="0" stop-color="#5a8ae8"/><stop offset="0.6" stop-color="#2448b8"/><stop offset="1" stop-color="#0c2a8c"/></radialGradient></defs><circle cx="7" cy="7" r="5" fill="url(#hg)"/><path d="M5 5.3C5 3.9 6 3.3 7.1 3.3 8.3 3.3 9.1 4 9.1 5 9.1 6.2 7.4 6.4 7.4 7.8" fill="none" stroke="#fff" stroke-width="1.5"/><rect x="6.6" y="9" width="1.6" height="1.6" fill="#fff"/></svg>
<div class="btn" style="left:450px;top:222px;width:173px;height:24px;line-height:26px;letter-spacing:0.209px;text-indent:0.209px">Save GradeBook Settings</div>
<div class="btn" style="left:981px;top:222px;width:51px;height:24px;line-height:26px;letter-spacing:0.213px;text-indent:0.213px">Copy</div>
<div class="btn" style="left:1043px;top:222px;width:172px;height:24px;line-height:26px;letter-spacing:0.253px;text-indent:0.253px">Copy to Multiple Sections</div>
<div class="btn" style="left:966px;top:257px;width:130px;height:24px;line-height:26px;letter-spacing:0.209px;text-indent:0.209px">Add Category</div>
<div class="btn" style="left:1100px;top:257px;width:130px;height:24px;line-height:26px;letter-spacing:0.308px;text-indent:0.308px">Add Tutorial Time</div>
<div class="btn" style="left:1234px;top:257px;width:116px;height:24px;line-height:26px;letter-spacing:0.286px;text-indent:0.286px">Add Attendance</div>
<div class="btn" style="left:1353px;top:257px;width:154px;height:24px;line-height:26px;letter-spacing:0.132px;text-indent:0.132px">Add Discussion Forum</div>
<div class="btn" style="left:1313px;top:616px;width:138px;height:24px;line-height:24px;letter-spacing:0.310px;text-indent:0.310px">Import Grade Scale</div>
<div class="btn" style="left:1455px;top:616px;width:52px;height:24px;line-height:24px;letter-spacing:0.290px;text-indent:0.290px">Add</div>
<div class="btn" style="left:609px;top:894px;width:173px;height:24px;line-height:24px;letter-spacing:0.192px;text-indent:0.192px">Save GradeBook Settings</div>
<div class="btn" style="left:790px;top:894px;width:132px;height:24px;line-height:24px;letter-spacing:0.187px;text-indent:0.187px">View Grade Report</div>
<div style="position:absolute;left:1128px;top:552px;width:22px;height:5px;overflow:hidden"><div style="position:absolute;left:0;top:-13px"><svg width="22" height="19" viewBox="0 0 22 19"><defs><linearGradient id="pb" x1="0" y1="0" x2="1" y2="0.6"><stop offset="0" stop-color="#a9d6ff"/><stop offset="0.45" stop-color="#6cc4ff"/><stop offset="0.6" stop-color="#4a9cff"/><stop offset="1" stop-color="#2f8af5"/></linearGradient><linearGradient id="pg" x1="0" y1="0" x2="0" y2="1"><stop offset="0" stop-color="#00c800"/><stop offset="0.6" stop-color="#10c010"/><stop offset="1" stop-color="#50c850"/></linearGradient><linearGradient id="ps" x1="0" y1="0" x2="1" y2="0"><stop offset="0" stop-color="#30b830"/><stop offset="0.75" stop-color="#eafbea"/><stop offset="1" stop-color="#50c850"/></linearGradient><clipPath id="pc"><ellipse cx="11" cy="9.1" rx="10.6" ry="9.1"/></clipPath></defs><ellipse cx="11" cy="9.1" rx="11" ry="9" fill="#1e64e6"/><ellipse cx="11" cy="8.2" rx="10.2" ry="7.8" fill="url(#pb)"/><g clip-path="url(#pc)"><path d="M10.8 7 L1.5 10.2 L0 20 L13.6 20 Z" fill="url(#pg)"/><path d="M4 15.5 L5 19 L13.6 19 L13.4 15.2 C10 15.6 7 15.6 4 15.5Z" fill="url(#ps)"/><path d="M10.8 7 L19.6 12.3 L22 20 L13.6 20 Z" fill="#ffc61c"/><path d="M13.6 20 L13.4 15.2 C15 15 16.8 14.4 19 13.8 L19 20Z" fill="#ffdca0"/></g></svg></div></div>
</div></body></html>
